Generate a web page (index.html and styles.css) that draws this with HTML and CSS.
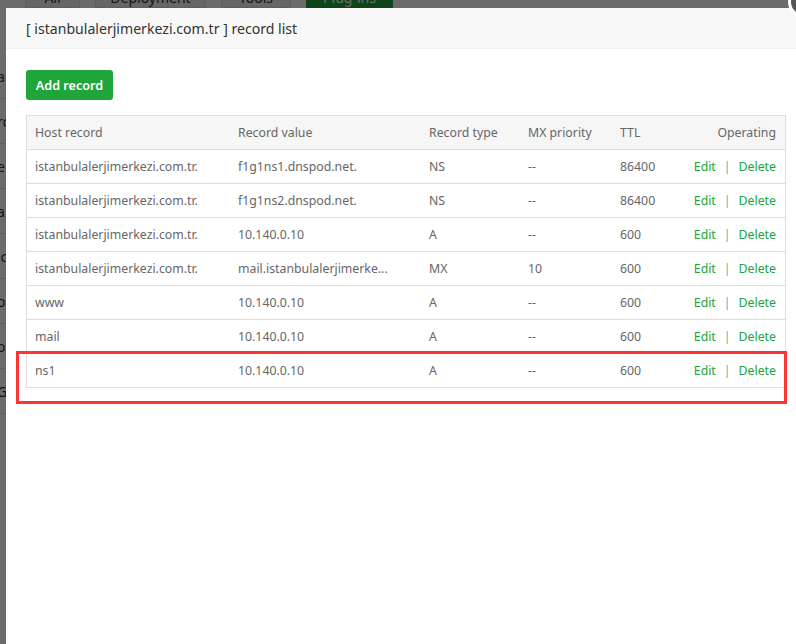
FILE: index.html
```html
<!DOCTYPE html>
<html>
<head>
<meta charset="utf-8">
<link rel="stylesheet" href="styles.css">
</head>
<body>
<div class="page">
  <div class="tabs">
    <span class="tab tab-all">All</span>
    <span class="tab tab-dep">Deployment</span>
    <span class="tab tab-tools">Tools</span>
    <span class="tab tab-plug">Plug-ins</span>
  </div>
  <div class="bg-rows">
    <div class="bg-row">ar</div>
    <div class="bg-row">rc</div>
    <div class="bg-row">e</div>
    <div class="bg-row">a</div>
    <div class="bg-row">ic</div>
    <div class="bg-row">o</div>
    <div class="bg-row">o</div>
    <div class="bg-row">Gü</div>
  </div>
</div>
<div class="shade"></div>
<div class="modal">
  <div class="modal-head">[ istanbulalerjimerkezi.com.tr ] record list</div>
  <div class="modal-body">
    <button class="btn-add">Add record</button>
    <table class="records">
      <thead>
        <tr><th>Host record</th><th>Record value</th><th>Record type</th><th>MX priority</th><th>TTL</th><th class="op">Operating</th></tr>
      </thead>
      <tbody>
        <tr><td>istanbulalerjimerkezi.com.tr.</td><td>f1g1ns1.dnspod.net.</td><td>NS</td><td>--</td><td>86400</td><td class="op"><a>Edit</a><span class="sep">|</span><a>Delete</a></td></tr>
        <tr><td>istanbulalerjimerkezi.com.tr.</td><td>f1g1ns2.dnspod.net.</td><td>NS</td><td>--</td><td>86400</td><td class="op"><a>Edit</a><span class="sep">|</span><a>Delete</a></td></tr>
        <tr><td>istanbulalerjimerkezi.com.tr.</td><td>10.140.0.10</td><td>A</td><td>--</td><td>600</td><td class="op"><a>Edit</a><span class="sep">|</span><a>Delete</a></td></tr>
        <tr><td>istanbulalerjimerkezi.com.tr.</td><td>mail.istanbulalerjimerke...</td><td>MX</td><td>10</td><td>600</td><td class="op"><a>Edit</a><span class="sep">|</span><a>Delete</a></td></tr>
        <tr><td>www</td><td>10.140.0.10</td><td>A</td><td>--</td><td>600</td><td class="op"><a>Edit</a><span class="sep">|</span><a>Delete</a></td></tr>
        <tr><td>mail</td><td>10.140.0.10</td><td>A</td><td>--</td><td>600</td><td class="op"><a>Edit</a><span class="sep">|</span><a>Delete</a></td></tr>
        <tr><td>ns1</td><td>10.140.0.10</td><td>A</td><td>--</td><td>600</td><td class="op"><a>Edit</a><span class="sep">|</span><a>Delete</a></td></tr>
      </tbody>
    </table>
  </div>
  <div class="highlight"></div>
</div>
<div class="close"></div>
</body>
</html>
```
FILE: styles.css
```css
html, body {
  margin: 0;
  padding: 0;
  width: 796px;
  height: 644px;
  overflow: hidden;
  font-family: "Noto Sans", "Open Sans", sans-serif;
}
body {
  position: relative;
  background: #fff;
}
.page {
  background: #fff;
  height: 644px;
}
.tabs {
  display: flex;
  margin-top: -14px;
  padding-left: 25px;
  gap: 15px;
  height: 22px;
}
.tab {
  display: flex;
  align-items: center;
  justify-content: center;
  height: 22px;
  font-size: 14px;
  color: #333;
  background: #f2f2f2;
  border: 1px solid #e0e0e0;
  box-sizing: border-box;
}
.tab-all { width: 55px; }
.tab-dep { width: 111px; }
.tab-tools { width: 70px; }
.tab-plug { width: 87px; background: #20a53a; color: #fff; border-color: #20a53a; }
.bg-rows {
  margin-top: 46px;
  padding-left: 0;
}
.bg-row {
  height: 44px;
  display: flex;
  align-items: center;
  border-bottom: 1px solid #ddd;
  font-size: 14px;
  color: #333;
  text-indent: -3px;
  width: 40px;
}
.shade {
  position: absolute;
  inset: 0;
  background: rgba(0, 0, 0, 0.58);
}
.modal {
  position: absolute;
  left: 6px;
  top: 8px;
  width: 800px;
  height: 660px;
  background: #fff;
}
.modal-head {
  height: 41px;
  box-sizing: border-box;
  background: #f8f8f8;
  border-bottom: 1px solid #eee;
  padding-left: 20px;
  display: flex;
  align-items: center;
  font-size: 14.1px;
  color: #333;
}
.modal-body {
  padding: 21px 0 0 20px;
}
.btn-add {
  display: block;
  height: 30px;
  width: 87px;
  padding: 0;
  border: 0;
  border-radius: 3px;
  background: #20a53a;
  color: #fff;
  font-family: inherit;
  font-size: 12.6px;
  font-weight: 600;
}
.records {
  margin-top: 15px;
  width: 760px;
  border-collapse: collapse;
  border: 1px solid #ddd;
  font-size: 12.3px;
  color: #666;
}
.records th {
  background: #f6f6f6;
  font-weight: normal;
  text-align: left;
  height: 33px;
  padding: 0 0 0 8px;
  border-bottom: 1px solid #ddd;
}
.records td {
  height: 33px;
  padding: 0 0 0 8px;
  border-bottom: 1px solid #ddd;
  white-space: nowrap;
}
.records th:nth-child(1) { width: 195px; }
.records th:nth-child(2) { width: 183px; }
.records th:nth-child(3) { width: 91px; }
.records th:nth-child(4) { width: 84px; }
.records th:nth-child(5) { width: 50px; }
.records .op {
  text-align: right;
  padding-right: 9px;
}
.records a {
  color: #20a53a;
}
.records .sep {
  color: #999;
  margin: 0 8px;
}
.highlight {
  position: absolute;
  left: 10px;
  top: 343px;
  width: 765px;
  height: 47px;
  border: 3px solid #f33;
}
.close {
  position: absolute;
  left: 788px;
  top: -13px;
  width: 24px;
  height: 24px;
  border-radius: 50%;
  background: #555;
  border: 3px solid #fff;
}
```
